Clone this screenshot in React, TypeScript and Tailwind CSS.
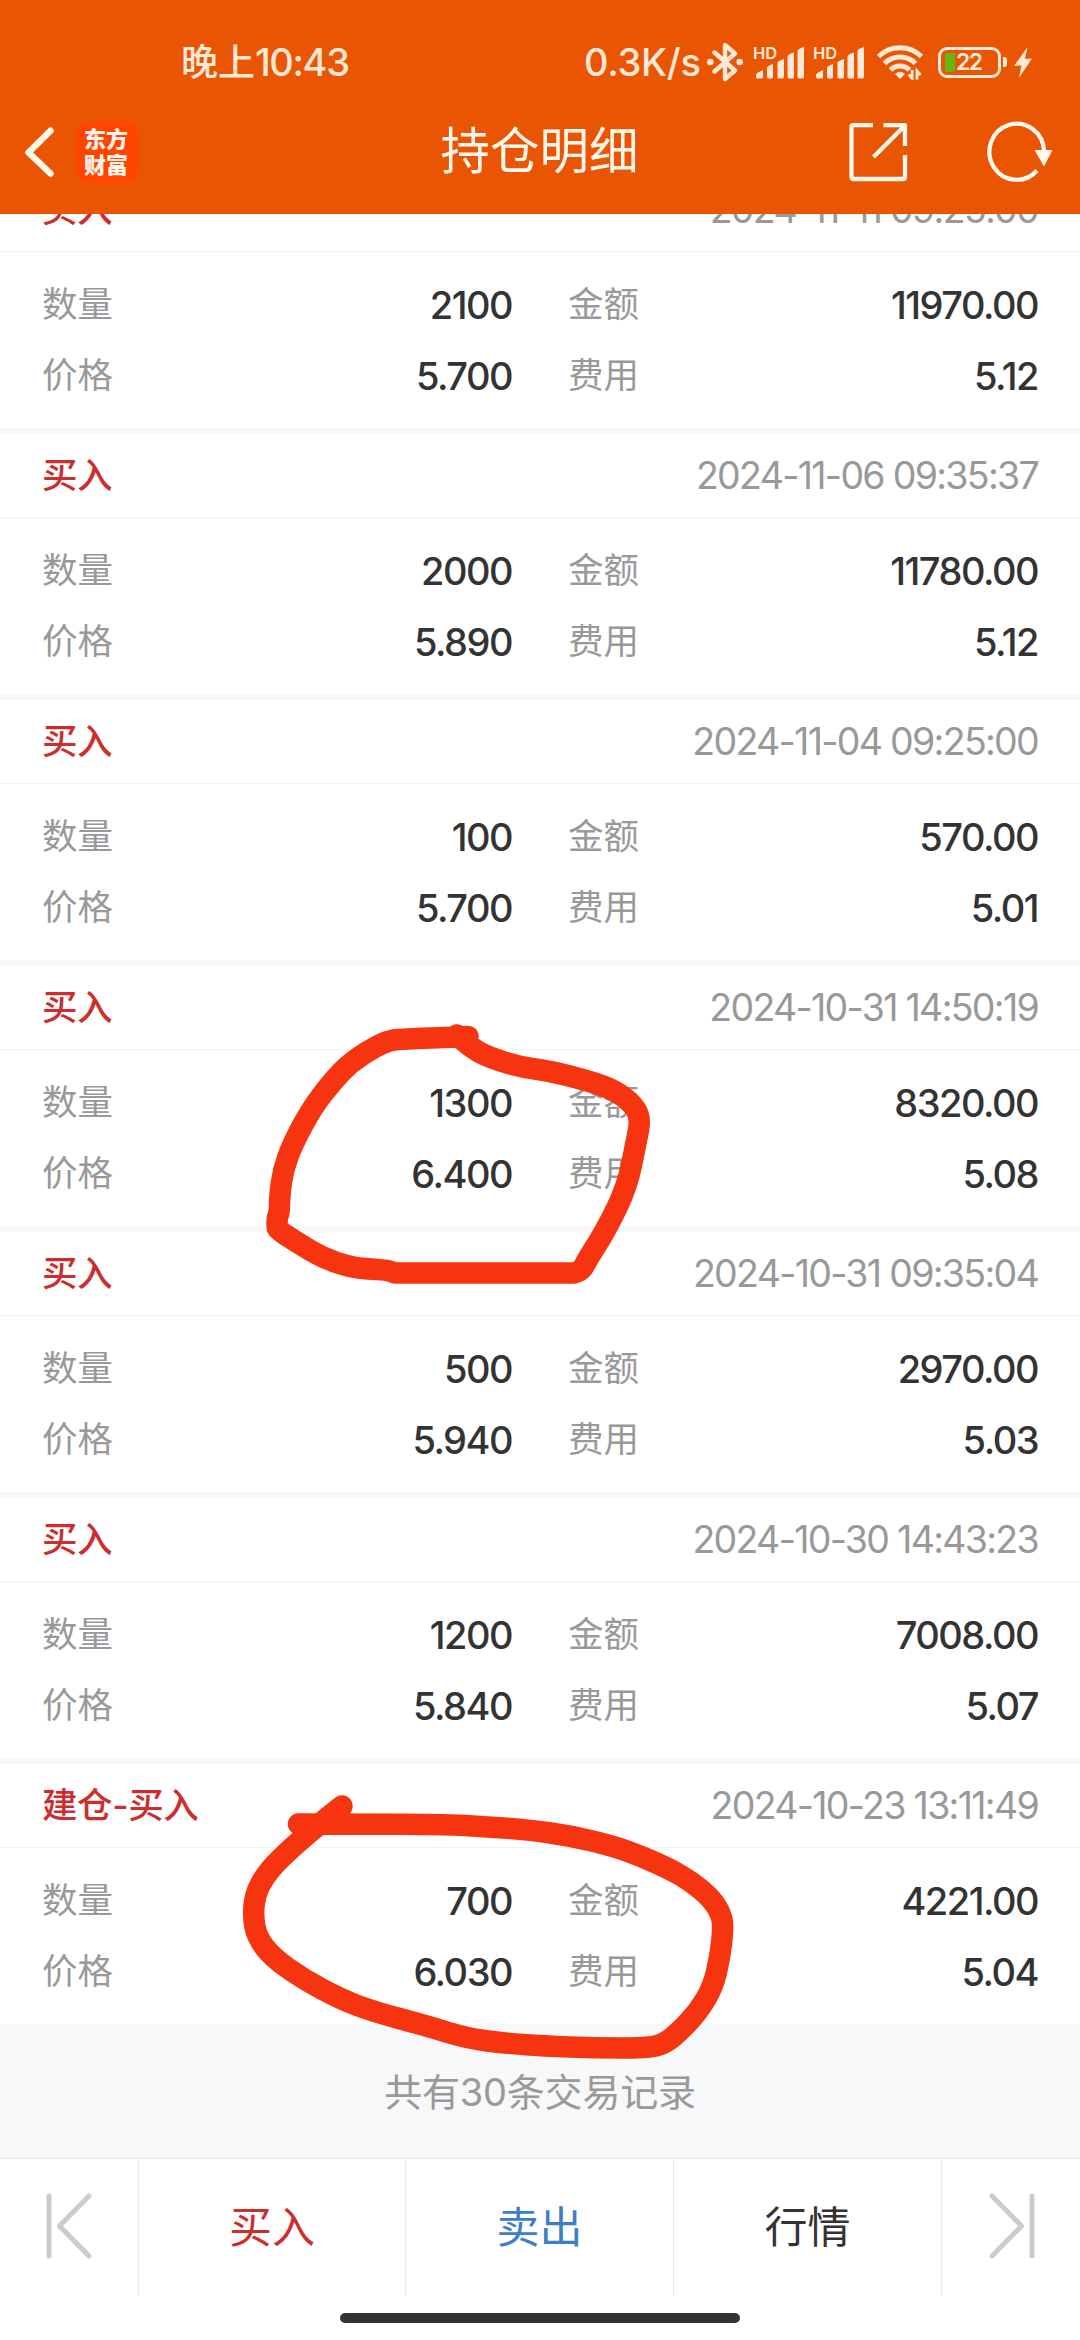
import React from 'react';
import clsx from 'clsx';

type TradeRecord = {
  type: string;
  time: string;
  quantity: string;
  amount: string;
  price: string;
  fee: string;
};

const RECORDS: TradeRecord[] = [
  { type: '买入', time: '2024-11-11 09:25:00', quantity: '2100', amount: '11970.00', price: '5.700', fee: '5.12' },
  { type: '买入', time: '2024-11-06 09:35:37', quantity: '2000', amount: '11780.00', price: '5.890', fee: '5.12' },
  { type: '买入', time: '2024-11-04 09:25:00', quantity: '100', amount: '570.00', price: '5.700', fee: '5.01' },
  { type: '买入', time: '2024-10-31 14:50:19', quantity: '1300', amount: '8320.00', price: '6.400', fee: '5.08' },
  { type: '买入', time: '2024-10-31 09:35:04', quantity: '500', amount: '2970.00', price: '5.940', fee: '5.03' },
  { type: '买入', time: '2024-10-30 14:43:23', quantity: '1200', amount: '7008.00', price: '5.840', fee: '5.07' },
  { type: '建仓-买入', time: '2024-10-23 13:11:49', quantity: '700', amount: '4221.00', price: '6.030', fee: '5.04' },
];

type Point = [number, number];

const UPPER_MARK: Point[] = [
  [217, 35], [230, 47], [248, 57], [280, 67], [310, 71], [345, 80], [370, 88], [390, 101], [401, 117],
  [396, 143], [387, 187], [366, 230], [347, 260], [342, 270], [334, 273], [334, 273], [155, 273], [155, 273],
  [147, 270], [128, 269], [110, 267], [83, 258], [58, 243], [38, 230], [37, 227], [37, 218], [39.5, 212],
  [39.5, 197], [43, 170], [53, 143], [72, 108], [92, 82], [110, 63], [133, 48], [150, 40], [167, 39],
  [228, 36.5],
];

const LOWER_MARK: Point[] = [
  [78.5, 54], [138, 54], [220, 54.3], [258, 56], [310, 60], [351, 66], [389, 75], [413, 83], [448, 98],
  [472, 112], [492, 129], [502, 146], [503, 160], [500, 187], [493, 217], [478, 242], [458, 263], [444, 274],
  [427, 278], [375, 278], [324, 276], [282, 273], [246, 268], [207, 256], [151.5, 241], [120.5, 229],
  [83, 209], [52, 187], [37, 167], [33, 147], [35, 125], [44, 107], [58.5, 90], [89.5, 62], [122, 36],
];

function strokePath(points: Point[]) {
  let d = `M${points[0][0]} ${points[0][1]}`;
  for (let i = 1; i < points.length - 1; i++) {
    const [x, y] = points[i];
    const [nx, ny] = points[i + 1];
    d += ` Q${x} ${y} ${(x + nx) / 2} ${(y + ny) / 2}`;
  }
  const last = points[points.length - 1];
  return `${d} L${last[0]} ${last[1]}`;
}

function Marker({ points, className }: { points: Point[]; className: string }) {
  return (
    <svg viewBox="0 0 540 320" className={clsx('absolute w-[540px] h-[320px] pointer-events-none', className)} fill="none">
      <path d={strokePath(points)} stroke="#f63510" strokeWidth="21.5" strokeLinecap="round" strokeLinejoin="round" />
    </svg>
  );
}

function SignalIcon() {
  return (
    <svg viewBox="0 0 50 33" className="w-[50px] h-[33px] overflow-visible" fill="currentColor">
      <text x="-1" y="13" fontSize="16.5" fontWeight="600" fontFamily="Inter, sans-serif">HD</text>
      <path d="M2 29q0-2 7-5v7q0 1.500-1.500 1.500H3.500Q2 32.500 2 31Z" />
      <path d="M13 21.500q0-1.500 6-3.500v13q0 1.500-1.500 1.500h-3q-1.500 0-1.500-1.500Z" />
      <path d="M23.500 16.500q0-1.500 6.500-3.500v18q0 1.500-1.500 1.500h-3.500q-1.500 0-1.500-1.500Z" />
      <path d="M33.500 10.500q0-2 6.500-4v24.500q0 1.500-1.500 1.500h-3.500q-1.500 0-1.500-1.500Z" />
      <path d="M43.500 5q0-2 6.500-4v30q0 1.500-1.500 1.500h-3.500q-1.500 0-1.500-1.500Z" />
    </svg>
  );
}

function StatusBar() {
  return (
    <div className="h-[92px] pt-[30px] pl-[181px] pr-[48px] flex items-start justify-between text-[#ffe8d6]">
      <div className="h-[64px] flex items-center whitespace-nowrap text-[37px] leading-none font-medium">
        晚上<span className="text-[38px] tracking-[-1.4px]">10:43</span>
      </div>
      <div className="h-[64px] flex items-center">
        <span className="w-[123px] text-[38px] leading-none font-medium tracking-[-0.3px] whitespace-nowrap">0.3K/s</span>
        <svg viewBox="0 0 36 40" className="w-[36px] h-[40px]" fill="none" stroke="currentColor" strokeWidth="4.400" strokeLinejoin="round" strokeLinecap="round">
          <path d="M7.500 10.500 28 28.500 18 37V3l10 8.500L7.500 29.500" />
          <path d="M3.300 20h.1M32.700 20h.1" strokeWidth="6.500" />
        </svg>
        <div className="ml-[11px] flex gap-[10px]">
          <SignalIcon />
          <SignalIcon />
        </div>
        <svg viewBox="0 0 46 36" className="ml-[13px] w-[46px] h-[36px]" fill="none" stroke="currentColor" strokeWidth="5">
          <path d="M1.500 12.500a30.500 30.500 0 0 1 43 0" />
          <path d="M7.500 19.500a22 22 0 0 1 31 0" />
          <path d="M13.500 26a13.500 13.500 0 0 1 19 0" />
          <path d="M18 30q5-4.500 10 0L23 35Z" fill="currentColor" stroke="none" />
          <path d="M35.200 26v8.500l-3.500-4M40 35.500V27l3.500 4" strokeWidth="2.800" />
        </svg>
        <div className="ml-[15px] w-[63px] h-[31px] rounded-[9px] border-[3.5px] border-[#ffe8d6] flex items-center pl-[4px]">
          <span className="w-[10px] h-[19px] rounded-[2px] bg-[#62b80d]" />
          <span className="ml-[1px] text-[23px] leading-none tracking-[-1.6px] font-semibold">22</span>
        </div>
        <span className="ml-[2px] w-[4px] h-[10px] rounded-r-[3px] bg-[#ffe8d6]" />
        <svg viewBox="0 0 18 31" className="ml-[7px] w-[18px] h-[31px]" fill="currentColor">
          <path d="M13.500 0 0 19 7.500 18.500 5 31 18 11.500 11 12Z" />
        </svg>
      </div>
    </div>
  );
}

function NavBar() {
  return (
    <div className="h-[122px] pb-[2px] pl-[24px] pr-[27px] grid grid-cols-[1fr_auto_1fr] items-center text-[#fff8ec]">
      <div className="flex items-center">
        <svg viewBox="0 0 31 50" className="w-[31px] h-[50px]" fill="none" stroke="currentColor" strokeWidth="6.500" strokeLinecap="round" strokeLinejoin="round">
          <path d="M26.500 3.800 4.500 25.500 26.500 46.500" />
        </svg>
        <div className="ml-[21px] w-[62px] h-[62px] rounded-[14px] bg-[#ff4500] flex flex-col items-center justify-center pr-[2px] text-[22px] leading-[26px] font-black text-[#fff3ec]">
          <span>东方</span>
          <span>财富</span>
        </div>
      </div>
      <h1 className="pl-[2px] text-[49.5px] leading-none font-normal whitespace-nowrap">持仓明细</h1>
      <div className="flex items-center justify-end gap-[79px]">
        <svg viewBox="0 0 60 60" className="w-[60px] h-[60px]" fill="none" stroke="currentColor" strokeWidth="4.300" strokeLinejoin="round">
          <path d="M25 3.200H5.500q-2 0-2 2V55q0 2 2 2H55q2 0 2-2V33" />
          <path d="M35.500 3.200H57V24M56.500 4 25.500 35" />
        </svg>
        <svg viewBox="0 0 66 62" className="w-[66px] h-[62px]" fill="none" stroke="currentColor" strokeWidth="4.200">
          <path d="M57 30A27.300 28 0 1 0 50 49.500" />
          <path d="M47.500 29h18L57 45.500Z" fill="currentColor" stroke="none" />
        </svg>
      </div>
    </div>
  );
}

function Field({ label, value }: { label: string; value: string }) {
  return (
    <div className="h-[71px] flex items-center justify-between">
      <span className="text-[35.5px] leading-none text-[#999]">{label}</span>
      <span className="text-[38px] leading-none font-medium tracking-[-1.5px] text-[#333]">{value}</span>
    </div>
  );
}

function RecordCard({ record }: { record: TradeRecord }) {
  return (
    <section className="h-[260px] shrink-0 bg-white">
      <div className="h-[84px] px-[42px] flex items-center justify-between border-b border-[#f3f3f4]">
        <span className="text-[35.5px] leading-none font-medium tracking-[-0.4px] text-[#cd2d2c]">{record.type}</span>
        <span className="text-[37.5px] leading-none tracking-[-1.7px] text-[#999]">{record.time}</span>
      </div>
      <div className="px-[42px] pt-[17px] grid grid-cols-2 gap-x-[56px]">
        <Field label="数量" value={record.quantity} />
        <Field label="金额" value={record.amount} />
        <Field label="价格" value={record.price} />
        <Field label="费用" value={record.fee} />
      </div>
    </section>
  );
}

function SkipIcon({ flipped = false }: { flipped?: boolean }) {
  return (
    <svg viewBox="0 0 46 66" className={clsx('w-[46px] h-[66px] mb-[4px]', flipped && '-scale-x-100 ml-[2px]')} fill="none" stroke="#ccc" strokeWidth="5" strokeLinecap="round" strokeLinejoin="round">
      <path d="M3 3v60M43 3 13.500 33 43 63" />
    </svg>
  );
}

function BottomBar() {
  return (
    <div className="h-[182px] bg-white border-t border-[#e6e6e8]">
      <div className="h-[137px] grid grid-cols-[139px_267px_268px_268px_1fr] divide-x divide-[#e9e9ea] text-[43px] leading-none">
        <button className="flex items-center justify-center"><SkipIcon /></button>
        <button className="flex items-center justify-center text-[#cd2d2c]">买入</button>
        <button className="flex items-center justify-center text-[#3d7dca]">卖出</button>
        <button className="flex items-center justify-center text-[#333]">行情</button>
        <button className="flex items-center justify-center"><SkipIcon flipped /></button>
      </div>
      <div className="mt-[17px] mx-auto w-[400px] h-[10px] rounded-full bg-[#333]" />
    </div>
  );
}

export default function App() {
  return (
    <div className="relative w-[1080px] h-[2340px] overflow-hidden flex flex-col bg-[#f7f8fa] font-[Inter,'Noto_Sans_CJK_SC',sans-serif]">
      <header className="h-[214px] shrink-0 bg-[#ea5503]">
        <StatusBar />
        <NavBar />
      </header>
      <main className="flex-1 overflow-hidden">
        {/* scrolled so the first card's header sits half under the nav bar */}
        <div className="-mt-[46px] flex flex-col gap-[6px]">
          {RECORDS.map(record => (
            <RecordCard key={record.time} record={record} />
          ))}
        </div>
        <p className="h-[134px] pt-px flex items-center justify-center text-[38px] leading-none tracking-[-0.2px] text-[#999]">共有30条交易记录</p>
      </main>
      <BottomBar />
      <Marker points={UPPER_MARK} className="left-[240px] top-[1000px]" />
      <Marker points={LOWER_MARK} className="left-[220px] top-[1770px]" />
    </div>
  );
}
